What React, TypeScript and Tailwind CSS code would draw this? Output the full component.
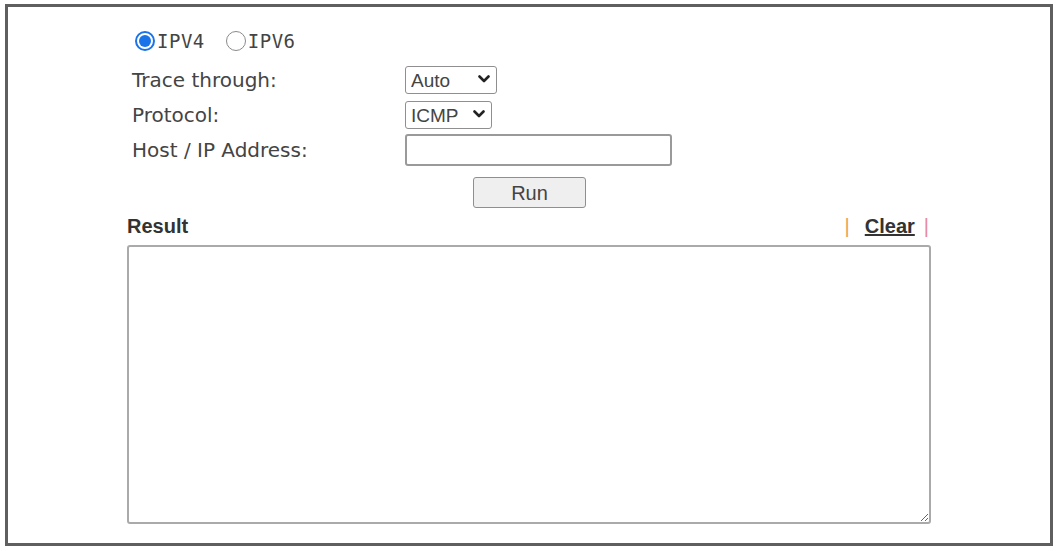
import React, { useState } from 'react';

const Chevron: React.FC = () => (
  <svg width="12" height="8" viewBox="0 0 12 8" className="text-[#222]">
    <path d="M1.5 1.5 L6 6 L10.5 1.5" fill="none" stroke="currentColor" strokeWidth="2.6" strokeLinecap="round" strokeLinejoin="round" />
  </svg>
);

const Radio: React.FC<{ checked: boolean; label: string; onClick: () => void }> = ({ checked, label, onClick }) => (
  <button type="button" onClick={onClick} className="flex items-center gap-[2px]">
    {checked ? (
      <span className="flex h-[20px] w-[20px] items-center justify-center rounded-full border-[2px] border-[#1a73e8] bg-white">
        <span className="h-[12px] w-[12px] rounded-full bg-[#1a73e8]" />
      </span>
    ) : (
      <span className="h-[20px] w-[20px] rounded-full border border-[#8a8a8a] bg-white" />
    )}
    <span className="font-['DejaVu_Sans_Mono',monospace] text-[19px] text-[#444] tracking-[0.5px]">{label}</span>
  </button>
);

const SelectBox: React.FC<{ value: string; options: string[]; width: string }> = ({ value, options, width }) => (
  <div className={`relative h-[28px] ${width}`}>
    <select
      defaultValue={value}
      className="h-full w-full appearance-none rounded-[3px] border border-[#8f8f8f] bg-white pl-[5px] font-['Liberation_Sans',Arial,sans-serif] text-[19px] text-[#444] outline-none"
    >
      {options.map((o) => (
        <option key={o}>{o}</option>
      ))}
    </select>
    <span className="pointer-events-none absolute right-[7px] top-[10px]">
      <Chevron />
    </span>
  </div>
);

const App: React.FC = () => {
  const [ipv, setIpv] = useState('4');

  return (
    <div className="h-[551px] w-[1059px] bg-white pl-[5px] pt-[4px]">
      <div className="h-[542px] w-[1048px] border-[3px] border-[#5f5f5f] bg-white">
        <div className="pl-[124px] pt-[19px]">
          {/* address family */}
          <div className="flex h-[30px] items-center gap-[21px] pl-[3px]">
            <Radio checked={ipv === '4'} label="IPV4" onClick={() => setIpv('4')} />
            <Radio checked={ipv === '6'} label="IPV6" onClick={() => setIpv('6')} />
          </div>

          <div className="mt-[9px] grid grid-cols-[273px_auto] font-['DejaVu_Sans',Verdana,sans-serif] text-[20px] text-[#444]">
            <div className="flex h-[28px] items-center pt-[2px]">Trace through:</div>
            <SelectBox value="Auto" options={['Auto', 'WAN1', 'WAN2']} width="w-[92px]" />

            <div className="mt-[7px] flex h-[28px] items-center pt-[2px]">Protocol:</div>
            <div className="mt-[7px]">
              <SelectBox value="ICMP" options={['ICMP', 'UDP']} width="w-[87px]" />
            </div>

            <div className="mt-[6px] flex h-[32px] items-center">Host / IP Address:</div>
            <input
              type="text"
              className="mt-[6px] h-[32px] w-[267px] rounded-[3px] border-[2px] border-[#9a9a9a] bg-white px-1 outline-none"
            />
          </div>

          <div className="mt-[11px] flex pl-[341px]">
            <button
              type="button"
              className="h-[31px] w-[113px] rounded-[3px] border border-[#8f8f8f] bg-[#efefef] font-['Liberation_Sans',Arial,sans-serif] text-[20px] text-[#444]"
            >
              Run
            </button>
          </div>
        </div>

        {/* trace output */}
        <div className="ml-[119px] mt-[4px] w-[804px] font-['Liberation_Sans',Arial,sans-serif] text-[20px] font-bold text-[#333]">
          <div className="flex h-[26px] items-end justify-between">
            <span className="leading-[23px]">Result</span>
            <span className="flex items-center pr-[2px] font-normal leading-[23px]">
              <span className="text-[#e8a25a]">|</span>
              <a href="#" className="ml-[15px] font-bold text-[#333] underline">Clear</a>
              <span className="ml-[9px] text-[#e88a9a]">|</span>
            </span>
          </div>
          <textarea className="mt-[7px] block h-[279px] w-[804px] resize-y rounded-[3px] border-[2px] border-[#aaa] bg-white outline-none" />
        </div>
      </div>
    </div>
  );
};

export default App;
